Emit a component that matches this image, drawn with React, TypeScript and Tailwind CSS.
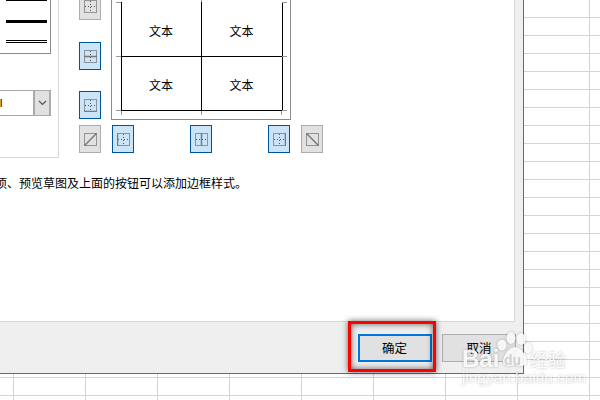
const cjk = "font-['Noto_Sans_CJK_SC','Liberation_Sans',sans-serif]";

type IconKind = "cross" | "middle" | "bottom" | "left" | "center" | "right" | "diagUp" | "diagDown";

const solid: Partial<Record<IconKind, string>> = {
  middle: "M0 6.5H13",
  bottom: "M0 12.5H13",
  left: "M0.5 0V13",
  center: "M6.5 0V13",
  right: "M12.5 0V13",
  diagUp: "M0 13L13 0",
  diagDown: "M0 0L13 13",
};

function BorderIcon({ kind }: { kind: IconKind }) {
  const diag = kind === "diagUp" || kind === "diagDown";
  return (
    <svg width="13" height="13" viewBox="0 0 13 13" fill="none">
      <rect x="0.5" y="0.5" width="12" height="12" stroke="#444" strokeDasharray="1 1" />
      {!diag && <path d="M6.5 1V13M1 6.5H13" stroke="#555" strokeDasharray="1 2" />}
      {solid[kind] && <path d={solid[kind]} stroke="#7a7a7a" strokeWidth="1.5" />}
    </svg>
  );
}

function BorderButton({ kind, active, className }: { kind: IconKind; active?: boolean; className?: string }) {
  return (
    <button
      className={`flex h-[28px] w-[22px] shrink-0 items-center justify-center border ${
        active ? "border-[#005499] bg-[#cce4f7]" : "border-[#adadad] bg-[#e1e1e1]"
      } ${className ?? ""}`}
    >
      <BorderIcon kind={kind} />
    </button>
  );
}

function LineStyles() {
  return (
    <div className="flex h-[54px] w-[51px] flex-col border-r border-b border-[#8a8a8f] pl-[6px]">
      <div className="h-px w-[41px] bg-black" />
      <div className="mt-[19px] h-[3px] w-[41px] bg-black" />
      <div className="mt-[17px] h-px w-[41px] bg-black" />
      <div className="mt-px h-px w-[41px] bg-black" />
    </div>
  );
}

function ColorSelect() {
  return (
    <div className="mt-[36px] flex h-[26px] w-[51px] items-stretch border-y border-[#a9a9a9] bg-white">
      <div className="flex flex-1 items-center">
        <div className="h-[8px] w-[2px] border-r border-[#1d5fb0] bg-[#e8962e]" />
      </div>
      <div className="flex w-[18px] items-center justify-center border-x-2 border-l-[#a9a9a9] border-r-[#adadad] bg-[#e1e1e1]">
        <svg width="9" height="6" viewBox="0 0 9 6" fill="none">
          <path d="M1 1L4.5 4.5L8 1" stroke="#555" strokeWidth="1.2" />
        </svg>
      </div>
    </div>
  );
}

function PreviewCell({ className }: { className: string }) {
  return <div className={`flex items-center justify-center pr-px text-[12px] text-black ${className}`}>文本</div>;
}

function PreviewGrid() {
  return (
    <div className="relative -mt-[8px] ml-[10px] h-[128px] w-[180px] border-x border-b border-[#8a8a8f] pl-[9px] pt-[10px]">
      <div className="grid h-[109px] w-[161px] grid-cols-[80px_81px] grid-rows-[54px_55px] border-l border-black">
        <PreviewCell className="border-r border-black pt-[4px]" />
        <PreviewCell className="border-r border-black pt-[4px]" />
        <PreviewCell className="border-y border-r border-black pt-[2px]" />
        <PreviewCell className="border-y border-r border-black pt-[2px]" />
      </div>
      <svg className="absolute left-0 top-0" width="178" height="127" fill="none" stroke="#9a9a9a">
        <path d="M4 10.5H9M4 64.5H9M4 118.5H9M9.5 119V123M89.5 119V123M169.5 119V123M170 10.5H175M170 64.5H175M170 118.5H175M89.5 6V10" />
      </svg>
    </div>
  );
}

function Watermark() {
  return (
    <div className="pointer-events-none absolute left-[460px] top-[332px] h-[56px] w-[110px] font-['Liberation_Sans',sans-serif] text-white drop-shadow-[0_0_1px_rgba(0,0,0,0.3)]">
      <svg className="absolute left-[36px] top-[0px]" width="40" height="36" viewBox="0 0 40 36" fill="#ffffff" fillOpacity="0.9">
        <ellipse cx="6" cy="13" rx="4.5" ry="5.5" />
        <ellipse cx="15" cy="6" rx="4.5" ry="6" />
        <ellipse cx="25" cy="7" rx="4.5" ry="6" />
        <ellipse cx="32" cy="16" rx="4" ry="5.5" />
        <path d="M19 15C25 15 31 24 31 29C31 34 25 35 19 33C13 35 7 34 7 29C7 24 13 15 19 15Z" />
      </svg>
      <span className="absolute left-[2px] top-[14px] text-[24px] font-bold leading-[26px] opacity-90">Bai</span>
      <span className="absolute left-[44px] top-[20px] text-[14px] font-bold leading-[16px] text-[#d0d0d0]">du</span>
      <span className={`absolute left-[70px] top-[16px] text-[18px] leading-[22px] opacity-90 ${cjk}`}>经验</span>
      <span className="absolute left-[2px] top-[38px] text-[15px] leading-[16px] tracking-[0.2px] opacity-80">jingyan.baidu.com</span>
    </div>
  );
}

export default function App() {
  return (
    <div className={`relative h-[400px] w-[600px] overflow-hidden bg-white bg-[linear-gradient(#d4d4d4_1px,transparent_1px),linear-gradient(90deg,#d4d4d4_1px,transparent_1px)] bg-[size:72px_18px] bg-[position:13px_17px] ${cjk}`}>
      <div className="absolute left-0 top-0 flex h-[374px] w-[524px] flex-col border-r border-b border-[#696969] bg-[#efefef]">
        <div className="h-[322px] w-[515px] border-r border-b border-[#d9d9d9] bg-white">
          <div className="flex items-start">
            <div className="h-[158px] w-[59px] border-r border-b border-[#d9d9d9]">
              <LineStyles />
              <ColorSelect />
            </div>
            <div className="ml-[20px]">
              <div className="flex">
                <div className="-mt-[8px] flex w-[22px] flex-col">
                  <BorderButton kind="cross" />
                  <BorderButton kind="middle" active className="mt-[22px]" />
                  <BorderButton kind="bottom" active className="mt-[21px]" />
                </div>
                <PreviewGrid />
              </div>
              <div className="mt-[5px] flex">
                <BorderButton kind="diagUp" />
                <BorderButton kind="left" active className="ml-[11px]" />
                <BorderButton kind="center" active className="ml-[56px]" />
                <BorderButton kind="right" active className="ml-[56px]" />
                <BorderButton kind="diagDown" className="ml-[11px]" />
              </div>
            </div>
          </div>
          <p className="-ml-[5px] mt-[17px] whitespace-nowrap text-[12px] leading-[16px] text-black">
            项、预览草图及上面的按钮可以添加边框样式。
          </p>
        </div>
        <div className="flex justify-end gap-[10px] pr-[7px] pt-[12px]">
          <div className="relative">
            <button className="h-[28px] w-[74px] border-2 border-[#0078d7] bg-[#e1e1e1] pr-px text-[12.5px] text-black">确定</button>
            <div className="absolute -bottom-[10px] -left-[10px] -right-[4px] -top-[13px] border-[3.5px] border-[#ff0000] shadow-[0_0_6px_rgba(0,0,0,0.6),inset_0_0_6px_rgba(0,0,0,0.6)]" />
          </div>
          <button className="h-[28px] w-[74px] border border-[#adadad] bg-[#e1e1e1] text-[12.5px] text-black">取消</button>
        </div>
      </div>
      <Watermark />
    </div>
  );
}
